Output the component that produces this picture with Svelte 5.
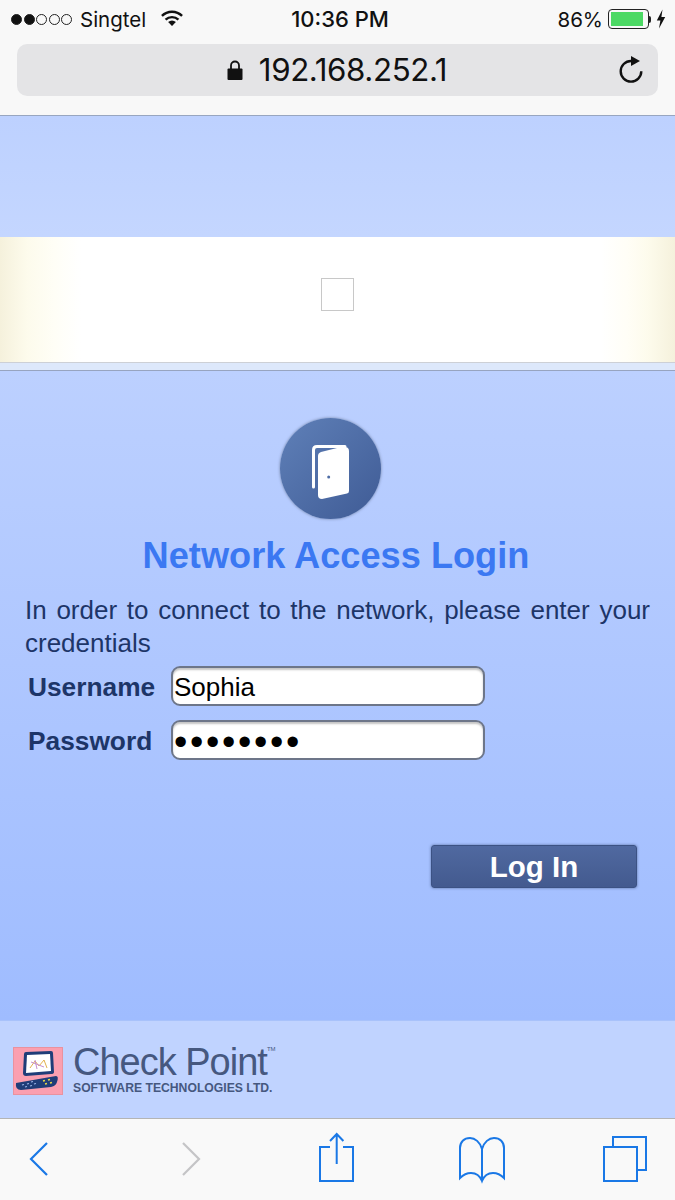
<script>
  const signal = [true, true, false, false, false];
</script>

<div class="page">
  <header class="chrome">
    <div class="status">
      <div class="status-left">
        <span class="dots">
          {#each signal as on}
            <i class:on></i>
          {/each}
        </span>
        <span class="carrier">Singtel</span>
        <svg class="wifi" width="22" height="16.500" viewBox="0 0 24 18">
          <path d="M1 6.500a15.500 15.500 0 0 1 22 0" fill="none" stroke="#111" stroke-width="2.600"/>
          <path d="M5 10.600a10 10 0 0 1 14 0" fill="none" stroke="#111" stroke-width="2.600"/>
          <path d="M12 17.500l-4.200-4.400a6 6 0 0 1 8.400 0z" fill="#111"/>
        </svg>
      </div>
      <div class="time">10:36 PM</div>
      <div class="status-right">
        <span class="pct">86%</span>
        <span class="battery"><b></b></span>
        <span class="nub"></span>
        <svg class="bolt" width="10" height="20" viewBox="0 0 10 20">
          <path d="M6.500 0.500L0.800 11.500h3.600L3 19.500l6.200-11.500H5.400z" fill="#111"/>
        </svg>
      </div>
    </div>
    <div class="urlbar">
      <div class="address">
        <svg width="16" height="20" viewBox="0 0 16 20">
          <path d="M4 9V5.500a4 4 0 0 1 8 0V9" fill="none" stroke="#111" stroke-width="1.800"/>
          <rect x="0.500" y="8.500" width="15" height="11.500" rx="1" fill="#111"/>
        </svg>
        <span>192.168.252.1</span>
      </div>
      <svg class="reload" width="24" height="28" viewBox="0 0 24 28">
        <path d="M12 5A10.300 10.300 0 1 0 22.300 15.300" fill="none" stroke="#111" stroke-width="2.400"/>
        <path d="M12 0l9 5-9 5z" fill="#111"/>
      </svg>
    </div>
  </header>

  <div class="sky"></div>
  <div class="banner">
    <div class="broken"></div>
  </div>
  <div class="strip"></div>

  <main class="login">
    <div class="door">
      <svg width="37" height="54" viewBox="0 0 37 54">
        <path d="M1.500 42V5q0-3.500 3.500-3.500H33" fill="none" stroke="#fff" stroke-width="3" stroke-linecap="round"/>
        <path d="M6 11q0-3 3-4l20-5q8-1 8 4V46q0 2-2 2.500L10 54q-4 0-4-4z" fill="#fff"/>
        <circle cx="16.700" cy="32" r="1.500" fill="#4d6ca5"/>
      </svg>
    </div>
    <h1>Network Access Login</h1>
    <p>In order to connect to the network, please enter your credentials</p>
    <form class="fields">
      <label for="user">Username</label>
      <input id="user" type="text" value="Sophia" readonly />
      <label for="pass">Password</label>
      <input id="pass" type="password" value="12345678" readonly />
    </form>
    <div class="actions">
      <button type="button">Log In</button>
    </div>
  </main>

  <div class="brand">
    <svg class="logo" width="50" height="48" viewBox="0 0 50 48">
      <rect x="0.500" y="0.500" width="49" height="47" fill="#fb9fb0" stroke="#e9929f"/>
      <path d="M13 5l25-1q2 0 2 2l1 19q0 2-3 2l-25 2q-3 0-3-3l1-19q0-2 2-2z" fill="#1f3d78"/>
      <path d="M14 8l23-1 1 17-25 2z" fill="#fff"/>
      <path d="M17 21l5-7 4 5 5-6 3 8" fill="none" stroke="#e3b04e" stroke-width="1"/>
      <path d="M18 15l13 5M22 13l2 9" fill="none" stroke="#c58fd0" stroke-width="1"/>
      <path d="M3 36l40-7q3 0 1 6q-1 4-6 5l-30 3q-6 0-5-7z" fill="#1f3d78"/>
      <path d="M9 38l2-.5M14 37l2-.5M18 35l2-.5M12 40l2-.5M17 39l2-.5M21 37l2-.5" stroke="#9db7ea" stroke-width="1.200"/>
      <path d="M30 34l2-.5M35 33l2-.5M32 37l2-.5M37 36l2-.5" stroke="#e8d84a" stroke-width="1.600"/>
    </svg>
    <div class="wordmark">
      <div class="name">Check Point<sup>TM</sup></div>
      <div class="sub">SOFTWARE TECHNOLOGIES LTD.</div>
    </div>
  </div>

  <footer class="toolbar">
    <svg width="675" height="81" viewBox="0 0 675 81">
      <g fill="none" stroke-width="2">
        <path d="M47 24L31 40l16 16" stroke="#1a78e6" stroke-width="2.200"/>
        <path d="M183 24l16 16-16 16" stroke="#c4c4c6" stroke-width="2.200"/>
        <g stroke="#1a78e6">
          <path d="M330 28h-10v34h33V28h-10M336.700 45V15M330 22l6.700-7 6.700 7"/>
          <path d="M482 30C480 23 475 19 470 19C464 19 460 23 460 29V59C464 55 468 54 471 54C476 54 480 57 482 62C484 57 488 54 493 54C496 54 500 55 504 59V29C504 23 500 19 494 19C489 19 484 23 482 30V62"/>
          <path d="M613 28V18H646V51H637"/>
          <rect x="604" y="28" width="33" height="34"/>
        </g>
      </g>
    </svg>
  </footer>
</div>

<style>
  :global(body) {
    background: #f9f9f9;
  }

  .page {
    width: 675px;
    height: 1200px;
    overflow: hidden;
    display: flex;
    flex-direction: column;
    font-family: "Liberation Sans", Arial, sans-serif;
  }

  .chrome {
    height: 115px;
    background: #f8f8f8;
    border-bottom: 1px solid #98a6c0;
    box-sizing: content-box;
    padding: 0 17px;
    width: 641px;
  }

  .status {
    height: 44px;
    padding-bottom: 6px;
    box-sizing: border-box;
    display: grid;
    grid-template-columns: 1fr auto 1fr;
    align-items: center;
    margin: 0 -6px;
    font-family: Inter, "Liberation Sans", sans-serif;
    font-size: 20.500px;
    color: #111;
  }

  .status-left,
  .status-right {
    display: flex;
    align-items: center;
  }

  .status-right {
    justify-content: flex-end;
    margin-right: -2px;
  }

  .dots {
    display: flex;
    gap: 1.500px;
    margin-right: 8px;
  }

  .dots i {
    width: 11px;
    height: 11px;
    border-radius: 50%;
    border: 1px solid #222;
    box-sizing: border-box;
  }

  .dots i.on {
    background: #111;
  }

  .wifi {
    margin-left: 15px;
    margin-top: -2px;
  }

  .time {
    font-size: 22px;
    font-weight: 500;
    margin-left: 5px;
  }

  .battery {
    width: 41px;
    height: 20px;
    border: 1px solid #222;
    border-radius: 4px;
    box-sizing: border-box;
    padding: 2px;
    margin-left: 5px;
  }

  .battery b {
    display: block;
    width: 32px;
    height: 100%;
    background: #4cd964;
  }

  .nub {
    width: 2px;
    height: 7px;
    background: #222;
    border-radius: 0 2px 2px 0;
  }

  .bolt {
    margin-left: 5px;
  }

  .urlbar {
    height: 52px;
    background: #e4e4e6;
    border-radius: 10px;
    position: relative;
    display: flex;
    align-items: center;
    justify-content: center;
  }

  .address {
    display: flex;
    align-items: center;
    gap: 16px;
    font-family: Inter, "Liberation Sans", sans-serif;
    font-size: 31.300px;
    letter-spacing: -0.400px;
    color: #111;
    margin-left: -1px;
  }

  .reload {
    position: absolute;
    right: 15px;
    top: 12px;
  }

  .sky {
    height: 121px;
    background: linear-gradient(#bdd1ff, #c4d6ff);
  }

  .banner {
    height: 126px;
    background: linear-gradient(90deg, #f5f1dc, #fdfbec 4%, #fffef6 8%, #fff 12%, #fff 89%, #fffef6 93%, #fdfbec 96%, #f5f1dc);
    border-bottom: 1px solid #cdd0d6;
    display: flex;
    align-items: center;
    justify-content: center;
    box-sizing: border-box;
  }

  .broken {
    width: 33px;
    height: 33px;
    border: 1px solid #c8c8c8;
    box-sizing: border-box;
    margin-bottom: 9px;
  }

  .strip {
    height: 8px;
    background: #dde8fb;
    border-bottom: 1px solid #97a4c0;
    box-sizing: border-box;
    flex: none;
  }

  .login {
    height: 650px;
    background: linear-gradient(#bcd0ff, #9fbcff);
    display: flex;
    flex-direction: column;
    box-sizing: border-box;
    padding: 47px 25px 0 25px;
  }

  .door {
    align-self: center;
    margin-left: -14px;
    width: 101px;
    height: 101px;
    flex: none;
    border-radius: 50%;
    background: linear-gradient(135deg, #5f80b8, #3f5b95);
    box-shadow: 0 0 3px #6f7f9f;
    display: flex;
    align-items: center;
    justify-content: center;
  }

  .door svg {
    margin-top: 8px;
  }

  h1 {
    margin: 17px 0 0 -3px;
    text-align: center;
    font-size: 36.200px;
    line-height: 40px;
    font-weight: 700;
    color: #3b78f2;
  }

  p {
    margin: 18px 0 0;
    font-size: 26px;
    line-height: 33px;
    color: #1d3568;
    text-align: justify;
  }

  .fields {
    display: grid;
    grid-template-columns: 146px 314px;
    grid-auto-rows: 40px;
    row-gap: 14px;
    margin-top: 6px;
    align-items: center;
  }

  label {
    font-size: 26.300px;
    font-weight: 700;
    color: #1d3568;
    padding: 4px 0 0 3px;
  }

  input {
    width: 100%;
    height: 40px;
    box-sizing: border-box;
    border: 2px solid #6d7689;
    border-radius: 9px;
    background: #fff;
    box-shadow: inset 0 2px 2px #c4c4c4;
    padding: 4px 1px 0;
    font-family: "Liberation Sans", Arial, sans-serif;
    font-size: 26px;
    color: #000;
    outline: none;
  }

  #pass {
    padding-top: 6px;
    font-size: 38px;
    letter-spacing: 2.700px;
  }

  .actions {
    display: flex;
    justify-content: flex-end;
    margin-top: 85px;
    padding-right: 13px;
  }

  button {
    width: 206px;
    height: 43px;
    border: 1px solid #3c5284;
    border-radius: 3px;
    background: linear-gradient(#5069a0, #435a8f);
    box-shadow: 0 0 3px #5a6f9f;
    color: #fff;
    font-family: "Liberation Sans", Arial, sans-serif;
    font-size: 29.500px;
    font-weight: 700;
    padding: 2px 0 0;
  }

  .brand {
    height: 98px;
    background: #c0d3ff;
    border-top: 1px solid #a8c2fb;
    box-sizing: border-box;
    display: flex;
    align-items: flex-start;
    padding: 26px 0 0 13px;
    gap: 10px;
  }

  .logo {
    flex: none;
  }

  .wordmark {
    color: #46587f;
    margin-top: -6px;
  }

  .name {
    font-size: 38px;
    line-height: 42px;
    letter-spacing: -1px;
  }

  sup {
    font-size: 6px;
    letter-spacing: 0;
    vertical-align: 24px;
    line-height: 0;
  }

  .sub {
    font-size: 12.200px;
    font-weight: 700;
    line-height: 12px;
    margin-top: -1px;
  }

  .toolbar {
    height: 81px;
    background: #f9f9f9;
    border-top: 1px solid #b4b4b4;
    box-sizing: content-box;
    flex: none;
  }

  .toolbar svg {
    display: block;
  }
</style>
